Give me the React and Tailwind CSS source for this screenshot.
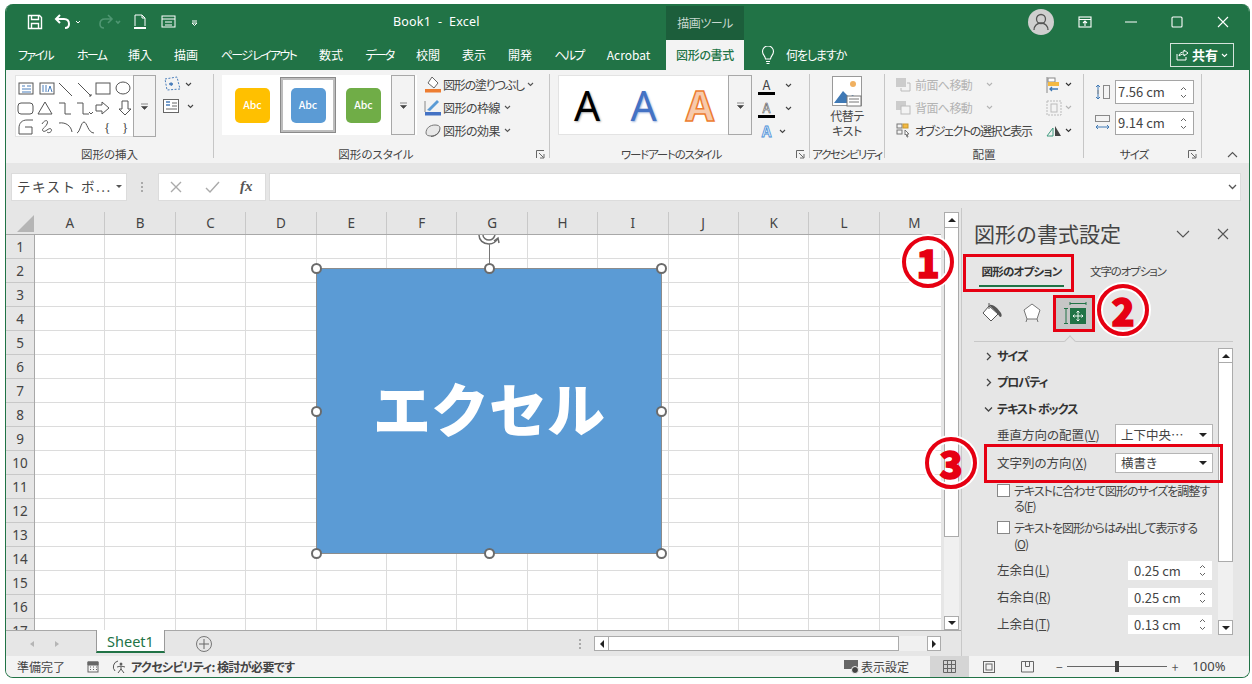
import React from "react";

const columns = ["A", "B", "C", "D", "E", "F", "G", "H", "I", "J", "K", "L", "M"];
const rows = Array.from({ length: 17 }, (_, i) => i + 1);
const tabs = [
  ["ファイル", "w-[34px] mr-[3px] tracking-[-1.7px]"],
  ["ホーム", "w-[29px] tracking-[-1.7px]"],
  ["挿入", "w-[24px]"],
  ["描画", "w-[24px]"],
  ["ページ レイアウト", "w-[77px] tracking-[-1.7px]"],
  ["数式", "w-[24px]"],
  ["データ", "w-[29px] tracking-[-1.7px]"],
  ["校閲", "w-[24px]"],
  ["表示", "w-[24px]"],
  ["開発", "w-[24px]"],
  ["ヘルプ", "w-[30px] tracking-[-1.7px]"],
  ["Acrobat", "w-[45px]"],
];

const Chevron = ({ className = "" }) => (
  <svg width="7" height="5" viewBox="0 0 7 5" className={className}>
    <path d="M1 1l2.5 2.5L6 1" fill="none" stroke="currentColor" strokeWidth="1.1" />
  </svg>
);

const Launcher = () => (
  <svg width="9" height="9" viewBox="0 0 9 9" className="text-[#666]">
    <path d="M.5 8V.5H8M3 3l4.5 4.5M4 8h4V4" fill="none" stroke="currentColor" />
  </svg>
);

const Sep = () => <div className="w-px h-[84px] mt-[4px] bg-[#c6c6c6] shrink-0" />;

const Group = ({ width, label, labelClass = "", launcher, children }) => (
  <div className={`${width} shrink-0 flex flex-col`}>
    <div className="h-[76px] flex">{children}</div>
    <div className="h-[17px] flex items-center">
      <div className={`flex-1 text-center text-[11.5px] leading-[17px] text-[#444] whitespace-nowrap ${labelClass}`}>{label}</div>
      {launcher && (
        <div className="w-[17px] flex justify-center">
          <Launcher />
        </div>
      )}
    </div>
  </div>
);

const MoreButton = ({ className }) => (
  <div className={`flex items-center justify-center bg-[#f3f3f3] border border-[#a8a8a8] ${className}`}>
    <svg width="9" height="7" viewBox="0 0 9 7" className="text-[#444]">
      <path d="M1 1h7M1.5 3.5h6L4.5 6.5z" fill="currentColor" stroke="currentColor" strokeWidth=".6" />
    </svg>
  </div>
);

const ShapeGallery = () => (
  <svg width="117" height="60" viewBox="0 0 117 60" fill="none" stroke="#555" strokeWidth="1">
    <rect x="3" y="7" width="14" height="11" fill="#fff" />
    <path d="M6 10h3M11 10h4M6 13h9M6 16h9" stroke="#4a7ebb" />
    <rect x="24" y="7" width="14" height="11" fill="#fff" />
    <path d="M27 9v7M30 9v7M34 10l2 6M34 10l-2 6" stroke="#4a7ebb" />
    <path d="M43 7l13 13M62 7l13 13M73 20l2 0 0-2" />
    <rect x="80" y="7" width="14" height="11" />
    <ellipse cx="107" cy="12" rx="7" ry="6" />
    <rect x="2" y="27" width="15" height="11" rx="3" />
    <path d="M22 38l7-12 7 12zM43 27h6v11h6M61 27h6v11h6M73 36l2 2 2-2M80 29h6v-3l7 6-7 6v-3h-6zM106 25v8h-3l6 6 6-6h-3v-8z" />
    <path d="M3 58v-6c0-5 3-8 8-8h6M3 58h13v-7H9" />
    <path d="M26 48c3-5 7-4 5 0s-6 5-4 7 6-4 8-2-2 5-4 3" />
    <path d="M43 47c7-1 12 3 13 9M61 57c3-1 4-11 7-11s4 11 10 11" />
    <text x="88" y="56" fontSize="13" fill="#444" stroke="none" fontFamily="Liberation Serif, serif">{"{"}</text>
    <text x="106" y="56" fontSize="13" fill="#444" stroke="none" fontFamily="Liberation Serif, serif">{"}"}</text>
  </svg>
);

const StyleTile = ({ color }) => (
  <div className={`w-[35px] h-[35px] rounded-[5px] flex items-center justify-center text-white text-[10.5px] font-medium ${color}`}>
    Abc
  </div>
);

const FillLabel = ({ icon, label, pad, track }) => (
  <div className="h-[23px] flex items-center whitespace-nowrap text-[12px] text-[#444]">
    <div className="w-[20px] flex justify-center">{icon}</div>
    <span className={track}>{label}</span>
    <Chevron className={`text-[#555] ${pad}`} />
  </div>
);

const SpinInput = ({ value, className }) => (
  <div className={`flex items-center justify-between bg-white border border-[#e6e6e6] text-[13px] text-[#444] ${className}`}>
    <span>{value}</span>
    <svg width="7" height="13" viewBox="0 0 7 13" className="mr-[6px] text-[#666]">
      <path d="M1 4l2.5-2.5L6 4M1 9l2.5 2.5L6 9" fill="none" stroke="currentColor" />
    </svg>
  </div>
);

const Select = ({ label, className }) => (
  <div className={`w-[98px] flex items-center justify-between bg-white border border-[#b5b5b5] text-[12.5px] text-[#444] ${className}`}>
    <span className="pl-[5px]">{label}</span>
    <div className="mr-[5px] w-0 h-0 border-x-[4px] border-x-transparent border-t-[4px] border-t-[#222]" />
  </div>
);

const ScrollButton = ({ dir, className = "" }) => (
  <div className={`flex items-center justify-center bg-white border border-[#ababab] shrink-0 ${className}`}>
    {dir === "up" && <div className="w-0 h-0 border-x-[4px] border-x-transparent border-b-[4px] border-b-[#222]" />}
    {dir === "down" && <div className="w-0 h-0 border-x-[4px] border-x-transparent border-t-[4px] border-t-[#222]" />}
    {dir === "left" && <div className="w-0 h-0 border-y-[4px] border-y-transparent border-r-[4px] border-r-[#222]" />}
    {dir === "right" && <div className="w-0 h-0 border-y-[4px] border-y-transparent border-l-[4px] border-l-[#222]" />}
  </div>
);

const Handle = ({ className }) => (
  <div className={`absolute w-[11px] h-[11px] rounded-full bg-white border-2 border-[#6b6b6b] ${className}`} />
);

const Callout = ({ n, className }) => (
  <div
    className={`absolute w-[52px] h-[52px] rounded-full border-[4px] border-[#e60012] flex items-center justify-center text-[#e60012] text-[38px] leading-none font-black [-webkit-text-stroke:1.5px_#e60012] [box-shadow:0_0_0_2px_#fff,inset_0_0_0_2px_#fff] ${className}`}
  >
    {n}
  </div>
);

const PanelField = ({ label, hot, value, className = "" }) => (
  <div className={`flex items-center justify-between pl-[13px] pr-[5px] text-[12.5px] text-[#444] ${className}`}>
    <span>
      {label}(<span className="underline">{hot}</span>)
    </span>
    <SpinInput value={value} className="w-[86px] h-[21px] pl-[6px]" />
  </div>
);

const SectionRow = ({ open, label, className = "" }) => (
  <div className={`h-[26px] flex items-center font-bold text-[12px] tracking-[-1px] text-[#333] ${className}`}>
    <svg width="13" height="9" viewBox="0 0 13 9" className="text-[#444] shrink-0">
      <path d={open ? "M1 2.5l3.5 3.5L8 2.5" : "M3 1l3.5 3.5L3 8"} fill="none" stroke="currentColor" strokeWidth="1.3" />
    </svg>
    <span>{label}</span>
  </div>
);

export default function App() {
  return (
    <div className="relative w-[1252px] h-[684px] bg-white pt-[4px] pl-[5px] pr-[2px] pb-[6px] overflow-hidden font-['Noto_Sans_CJK_JP',sans-serif] [font-feature-settings:'palt']">
      <div className="h-full flex flex-col rounded-[8px] overflow-hidden border-l border-r border-b border-[#217346] bg-[#e6e6e6]">
        {/* title bar */}
        <div className="h-[36px] bg-[#217346] flex text-white shrink-0">
          <div className="w-[660px] flex items-center shrink-0">
            <svg width="190" height="18" viewBox="0 0 190 18" className="ml-[21px]" fill="none" stroke="#fff" strokeWidth="1.4">
              <path d="M1.5 2.5h11l2 2v11h-13zM4.5 2.5v4h7v-4M4.5 15.5v-5h7v5" />
              <path d="M30 6h7c3 0 5 2 5 5s-2 4-4 4M33 2l-4 4 4 4" strokeWidth="2" />
              <path d="M49 8l2 2 2-2" strokeWidth="1" />
              <path d="M84 6h-6c-3 0-5 2-5 5s2 4 4 4M81 2l4 4-4 4M89 8l2 2 2-2" stroke="#4f9672" strokeWidth="1.6" />
              <path d="M108 2h7l3 3v8M108 2v11M115 2v3h3" strokeWidth="1" />
              <path d="M107 15h12" strokeWidth="2" />
              <rect x="135" y="3" width="13" height="11" strokeWidth="1" />
              <path d="M135 6h13M138 9h7M138 12h7" strokeWidth="1" />
              <path d="M165 8h5M165 10h5l-2.5 2.500z" strokeWidth="1" />
            </svg>
            <div className="ml-[176px] text-[12.5px] whitespace-nowrap font-['Noto_Sans',sans-serif] tracking-[0.2px]">Book1 &nbsp;-&nbsp; Excel</div>
          </div>
          <div className="w-[78px] mt-[2px] bg-[#1c5e3b] flex items-center justify-center text-[12px] tracking-[-0.5px] text-[#c7d8cf]">描画ツール</div>
          <div className="flex-1 flex items-center">
            <div className="ml-[284px] w-[26px] h-[26px] rounded-full bg-[#cfcfcf] flex items-center justify-center">
              <svg width="16" height="18" viewBox="0 0 16 18" fill="none" stroke="#555" strokeWidth="1.3">
                <circle cx="8" cy="6" r="4.5" />
                <path d="M1 17c0-4 3-7 7-7s7 3 7 7" />
              </svg>
            </div>
            <svg width="152" height="14" viewBox="0 0 152 14" className="ml-[24px]" fill="none" stroke="#fff" strokeWidth="1.1">
              <rect x="1" y="2" width="12" height="10" />
              <path d="M1 4.500h12M7 11V6M5 8l2-2 2 2" />
              <path d="M47 7h12" />
              <rect x="94" y="2" width="10" height="10" rx="1" />
              <path d="M140 2l10 10M150 2l-10 10" />
            </svg>
          </div>
        </div>
        {/* tabs */}
        <div className="h-[30px] bg-[#217346] flex text-white text-[12px] shrink-0">
          <div className="flex items-center gap-[22px] pl-[12px] w-[660px] shrink-0 whitespace-nowrap">
            {tabs.map(([label, w]) => (
              <div key={label} className={`${w} text-center shrink-0`}>
                {label}
              </div>
            ))}
          </div>
          <div className="w-[78px] bg-[#f3f3f3] text-[#217346] flex items-center justify-center font-medium tracking-[-0.3px]">図形の書式</div>
          <div className="flex-1 flex items-center">
            <svg width="16" height="19" viewBox="0 0 16 19" className="ml-[16px] shrink-0" fill="none" stroke="#fff" strokeWidth="1.1">
              <path d="M5.500 13c0-3-3-4-3-7.500a5.500 5.500 0 0 1 11 0C13.500 9 10.500 10 10.500 13zM6 15.500h4M6.500 17.500h3" />
            </svg>
            <span className="ml-[10px] w-[60px] whitespace-nowrap tracking-[-1.1px] shrink-0">何をしますか</span>
            <div className="ml-[324px] w-[64px] h-[24px] border border-[#d5e3db] flex items-center justify-center gap-[3px] font-bold text-[13px] shrink-0">
              <svg width="13" height="12" viewBox="0 0 13 12" fill="none" stroke="#fff">
                <path d="M1 5v6h9V8M3 7c0-3 3-4 5-4V1l4 3-4 3V5C6 5 4 6 3 7z" />
              </svg>
              共有
              <Chevron className="text-white" />
            </div>
          </div>
        </div>
        {/* ribbon */}
        <div className="h-[93px] bg-[#f3f3f3] flex shrink-0">
          <Group width="w-[207px]" label="図形の挿入">
            <div className="ml-[9px] mt-[5px] w-[141px] h-[62px] bg-white border border-[#e3e3e3] flex">
              <div className="flex-1">
                <ShapeGallery />
              </div>
              <MoreButton className="w-[23px] -my-px -mr-px" />
            </div>
            <div className="ml-[7px] mt-[5px] flex flex-col gap-[6px]">
              <div className="flex items-center gap-[2px] text-[#444]">
                <svg width="20" height="18" viewBox="0 0 20 18" fill="none" stroke="#4a7ebb" strokeDasharray="2 1.500">
                  <path d="M2 4l12-2 3 12-13 1z" />
                  <circle cx="8" cy="9" r="1.500" fill="#4a7ebb" />
                </svg>
                <Chevron />
              </div>
              <div className="flex items-center gap-[8px] text-[#444]">
                <svg width="16" height="14" viewBox="0 0 16 14" fill="none" stroke="#666">
                  <rect x=".5" y=".5" width="15" height="13" fill="#fff" />
                  <path d="M3 3h4M3 6h4" stroke="#4a7ebb" strokeWidth="1.500" />
                  <path d="M9 4h5M9 7h5M3 10h11" />
                </svg>
                <Chevron />
              </div>
            </div>
          </Group>
          <Sep />
          <Group width="w-[335px]" label="図形のスタイル" labelClass="pl-[6px]" launcher>
            <div className="ml-[8px] mt-[5px] w-[195px] h-[60px] bg-white flex items-center pl-[13px] shrink-0">
              <StyleTile color="bg-[#ffc000]" />
              <div className="ml-[10px] w-[56px] h-[56px] border-[3px] border-[#bdbdbd] outline outline-1 outline-[#8a8a8a] -outline-offset-1 flex items-center justify-center">
                <StyleTile color="bg-[#5b9bd5]" />
              </div>
              <div className="ml-[10px]">
                <StyleTile color="bg-[#70ad47]" />
              </div>
              <MoreButton className="ml-[10px] w-[24px] h-[60px]" />
            </div>
            <div className="ml-[6px] mt-[3px] flex flex-col">
              <FillLabel
                label="図形の塗りつぶし"
                pad="ml-[3px]"
                track="tracking-[-1.2px]"
                icon={
                  <svg width="18" height="17" viewBox="0 0 18 17">
                    <path d="M8 1l6 6-4 5-6-5z" fill="#fff" stroke="#666" />
                    <rect x="1" y="13" width="16" height="3.500" fill="#ed7d31" />
                  </svg>
                }
              />
              <FillLabel
                label="図形の枠線"
                pad="ml-[4px]"
                track="tracking-[-0.5px]"
                icon={
                  <svg width="18" height="17" viewBox="0 0 18 17">
                    <path d="M3 11L13 1l2 2L6 12z" fill="#5b9bd5" />
                    <path d="M1 2v11" stroke="#888" />
                    <rect x="1" y="13" width="16" height="3.500" fill="#4472c4" />
                  </svg>
                }
              />
              <FillLabel
                label="図形の効果"
                pad="ml-[4px]"
                track="tracking-[-0.5px]"
                icon={
                  <svg width="18" height="15" viewBox="0 0 18 15">
                    <path d="M2 10c0-5 4-8 9-8 3 0 5 1 5 3 0 5-4 8-9 8-3 0-5-1-5-3z" fill="#e8e8e8" stroke="#777" />
                    <path d="M7 13c4 0 8-3 9-8v2c-1 4-5 7-9 7z" fill="#666" />
                  </svg>
                }
              />
            </div>
          </Group>
          <Sep />
          <Group width="w-[259px]" label="ワードアートのスタイル" labelClass="tracking-[-1.2px]" launcher>
            <div className="ml-[8px] mt-[5px] w-[194px] h-[60px] bg-white border border-[#e3e3e3] flex items-center shrink-0">
              <div className="w-[57px] text-center text-[41px] leading-none font-['Noto_Sans',sans-serif] text-black [text-shadow:1px_1px_2px_#aaa]">A</div>
              <div className="w-[57px] text-center text-[41px] leading-none font-['Noto_Sans',sans-serif] text-[#4472c4] [text-shadow:1px_1px_2px_#9db4dc]">A</div>
              <div className="w-[57px] text-center text-[41px] leading-none font-['Noto_Sans',sans-serif] font-bold text-[#f7caac] [-webkit-text-stroke:1.5px_#ed7d31]">A</div>
              <MoreButton className="w-[24px] h-[60px] -mr-[1px]" />
            </div>
            <div className="ml-[6px] mt-[4px] flex flex-col text-[#444]">
              <div className="h-[23px] flex items-center gap-[10px]">
                <div className="w-[17px] border-b-[3px] border-black text-center text-[13px] leading-[15px]">A</div>
                <Chevron />
              </div>
              <div className="h-[23px] flex items-center gap-[10px]">
                <div className="w-[17px] border-b-[3px] border-black text-center text-[13px] leading-[15px] text-white [-webkit-text-stroke:0.6px_#555]">A</div>
                <Chevron />
              </div>
              <div className="h-[22px] flex items-center gap-[4px]">
                <div className="w-[17px] text-center text-[15px] leading-[16px] font-bold text-[#dbe8f6] [-webkit-text-stroke:0.8px_#4a90d9]">A</div>
                <Chevron />
              </div>
            </div>
          </Group>
          <Sep />
          <Group width="w-[74px]" label="アクセシビリティ" labelClass="tracking-[-1.4px]">
            <div className="w-full flex flex-col items-center pt-[6px]">
              <svg width="30" height="31" viewBox="0 0 30 31">
                <rect x=".5" y=".5" width="29" height="29" fill="#fff" stroke="#999" />
                <circle cx="21" cy="8" r="3" fill="#f0b060" />
                <path d="M2 27l9-12 6 6 4-2 6 8z" fill="#3f79b5" />
                <rect x="15" y="20" width="14" height="10" fill="#fff" stroke="#777" />
                <path d="M17 23h10M17 26h10" stroke="#777" />
              </svg>
              <div className="mt-[1px] text-[12px] leading-[15px] text-center text-[#444] tracking-[-0.5px]">
                代替テ
                <br />
                キスト
              </div>
            </div>
          </Group>
          <Sep />
          <Group width="w-[198px]" label="配置">
            <div className="pl-[11px] pt-[3px] w-[150px] shrink-0 flex flex-col whitespace-nowrap text-[12px]">
              <div className="h-[23px] flex items-center text-[#b4b4b4] tracking-[-0.6px]">
                <svg width="15" height="14" viewBox="0 0 15 14" className="mr-[4px] shrink-0">
                  <rect x="0" y="0" width="10" height="9" fill="#ccc" />
                  <path d="M11 5h3v8H5v-3" fill="none" stroke="#bbb" />
                </svg>
                前面へ移動
                <Chevron className="ml-[14px]" />
              </div>
              <div className="h-[23px] flex items-center text-[#b4b4b4] tracking-[-0.6px]">
                <svg width="15" height="14" viewBox="0 0 15 14" className="mr-[4px] shrink-0">
                  <rect x="0" y="0" width="10" height="9" fill="#ccc" />
                  <rect x="5" y="5" width="9" height="8" fill="#f3f3f3" stroke="#bbb" />
                </svg>
                背面へ移動
                <Chevron className="ml-[14px]" />
              </div>
              <div className="h-[23px] flex items-center text-[#444] tracking-[-1.4px]">
                <svg width="15" height="15" viewBox="0 0 15 15" className="mr-[4px] shrink-0" fill="none" stroke="#777">
                  <rect x="1" y="1" width="5" height="4" />
                  <rect x="7" y="1" width="5" height="4" fill="#f4b942" stroke="#c99a30" />
                  <rect x="1" y="7" width="5" height="4" />
                  <path d="M9 7l4 4-2 0 1 3-1 0-1-3-1 1z" fill="#fff" />
                </svg>
                オブジェクトの選択と表示
              </div>
            </div>
            <div className="ml-[11px] pt-[3px] flex flex-col">
              <div className="h-[23px] flex items-center gap-[4px] text-[#333]">
                <svg width="15" height="18" viewBox="0 0 15 18">
                  <path d="M1 1v16" stroke="#888" />
                  <rect x="2" y="2" width="7" height="4" fill="#fff" stroke="#888" />
                  <rect x="2" y="6" width="11" height="4" fill="#f4b942" />
                  <path d="M12 13H4M6 11l-2 2 2 2" stroke="#3f79b5" fill="none" strokeWidth="1.300" />
                </svg>
                <Chevron />
              </div>
              <div className="h-[23px] flex items-center gap-[3px] text-[#b4b4b4]">
                <svg width="16" height="16" viewBox="0 0 16 16" fill="none" stroke="#bbb" strokeDasharray="2 1">
                  <rect x="1" y="1" width="14" height="14" />
                  <rect x="5" y="4" width="6" height="8" strokeDasharray="none" />
                </svg>
                <Chevron />
              </div>
              <div className="h-[23px] flex items-center gap-[3px] text-[#333]">
                <svg width="16" height="13" viewBox="0 0 16 13">
                  <path d="M1 12l6-8v8z" fill="none" stroke="#3f9b7f" />
                  <path d="M9 2v10h6z" fill="#444" />
                </svg>
                <Chevron />
              </div>
            </div>
          </Group>
          <Sep />
          <Group width="w-[117px]" label="サイズ" labelClass="tracking-[-1px]" launcher>
            <div className="pl-[11px] pt-[10px] flex flex-col gap-[7px]">
              <div className="flex items-center gap-[5px]">
                <svg width="15" height="18" viewBox="0 0 15 18" fill="none">
                  <path d="M3 2v14M1 4l2-2 2 2M1 14l2 2 2-2" stroke="#3f79b5" />
                  <path d="M3 7v4" stroke="#888" />
                  <rect x="8.500" y="2.500" width="6" height="13" stroke="#888" />
                </svg>
                <SpinInput value="7.56 cm" className="w-[79px] h-[24px] pl-[2px] !border-[#a5a5a5]" />
              </div>
              <div className="flex items-center gap-[5px]">
                <svg width="15" height="18" viewBox="0 0 15 18" fill="none">
                  <rect x=".5" y="1.500" width="14" height="6" stroke="#888" />
                  <path d="M1 13h13M3 11l-2 2 2 2M12 11l2 2-2 2" stroke="#3f79b5" />
                </svg>
                <SpinInput value="9.14 cm" className="w-[79px] h-[24px] pl-[2px] !border-[#a5a5a5]" />
              </div>
            </div>
          </Group>
          <Sep />
          <div className="flex-1 flex items-end justify-end pr-[11px] pb-[5px]">
            <svg width="11" height="7" viewBox="0 0 11 7" className="text-[#555]">
              <path d="M1 6l4.500-4.500L10 6" fill="none" stroke="currentColor" strokeWidth="1.100" />
            </svg>
          </div>
        </div>
        {/* formula bar */}
        <div className="h-[45px] flex items-center pl-[5px] pr-[8px] pt-[2px] shrink-0">
          <div className="w-[116px] h-[28px] bg-white border border-[#dcdcdc] flex items-center justify-between text-[#444] text-[13.500px] tracking-[1.5px] pl-[5px] pr-[4px] [font-feature-settings:normal] whitespace-nowrap shrink-0">
            テキスト ボ...
            <div className="w-0 h-0 border-x-[3px] border-x-transparent border-t-[3px] border-t-[#555]" />
          </div>
          <svg width="4" height="12" viewBox="0 0 4 12" className="ml-[13px] mr-[14px] shrink-0">
            <path d="M1 1h2v2H1zM1 5h2v2H1zM1 9h2v2H1z" fill="#aaa" />
          </svg>
          <div className="w-[108px] h-[28px] bg-white border border-[#dcdcdc] flex items-center text-[#aaa] shrink-0">
            <svg width="12" height="12" viewBox="0 0 12 12" className="ml-[11px]">
              <path d="M1 1l10 10M11 1L1 11" stroke="currentColor" strokeWidth="1.400" />
            </svg>
            <svg width="15" height="12" viewBox="0 0 15 12" className="ml-[23px]">
              <path d="M1 7l4 4 9-10" fill="none" stroke="currentColor" strokeWidth="1.400" />
            </svg>
            <span className="ml-[20px] text-[15px] font-bold italic font-['Liberation_Serif',serif] text-[#555]">fx</span>
          </div>
          <div className="ml-[3px] flex-1 h-[28px] bg-white border border-[#dcdcdc] flex items-center justify-end pr-[3px] text-[#555]">
            <svg width="9" height="6" viewBox="0 0 9 6">
              <path d="M1 1l3.500 3.500L8 1" fill="none" stroke="currentColor" strokeWidth="1.300" />
            </svg>
          </div>
        </div>
        {/* work area */}
        <div className="flex-1 flex min-h-0">
          <div className="w-[955px] shrink-0 flex flex-col">
            <div className="h-[422px] pt-[4px] flex">
              <div className="w-[935px] flex flex-col shrink-0 overflow-hidden">
                <div className="h-[23px] flex border-b border-[#a8a8a8] text-[#444] text-[13.500px] font-['Noto_Sans',sans-serif] shrink-0">
                  <div className="w-[29px] flex items-end justify-end pr-[1px] pb-[2px] shrink-0">
                    <div className="w-0 h-0 border-l-[17px] border-l-transparent border-b-[17px] border-b-[#b5b5b5]" />
                  </div>
                  {columns.map((c) => (
                    <div key={c} className="w-[70.4px] shrink-0 flex items-center justify-center border-r border-[#c8c8c8]">
                      {c}
                    </div>
                  ))}
                </div>
                <div className="flex-1 flex min-h-0 overflow-hidden">
                  <div className="w-[29px] shrink-0 text-[#444] text-[13.500px] font-['Noto_Sans',sans-serif] border-r border-[#a8a8a8]">
                    {rows.map((r) => (
                      <div key={r} className="h-[24px] pt-[1px] flex items-center justify-center border-b border-[#c8c8c8]">
                        {r}
                      </div>
                    ))}
                  </div>
                  <div className="relative flex-1 bg-white overflow-hidden">
                    {rows.map((r) => (
                      <div key={r} className="h-[24px] flex border-b border-[#dcdcdc]">
                        {columns.map((c) => (
                          <div key={c} className="w-[70.4px] shrink-0 h-full border-r border-[#dcdcdc]" />
                        ))}
                      </div>
                    ))}
                    <svg width="28" height="12" viewBox="0 0 28 12" className="absolute left-[440px] top-0" fill="none" stroke="#6b6b6b" strokeWidth="1.500">
                      <path d="M4 0c0 5 4 9 10 9s8-4 9-6M8 0c0 3 3 5 6 5s5-2 6-5M19 6l4-3 1 5" />
                    </svg>
                    <div className="absolute left-[454px] top-[9px] w-px h-[24px] bg-[#777]" />
                    <div className="absolute left-[281px] top-[33px] w-[346px] h-[286px] bg-[#5b9bd5] border border-[#8c8c8c] flex items-center justify-center">
                      <span className="text-white text-[58px] font-black leading-none whitespace-nowrap -mt-[9px] [font-feature-settings:normal]">エクセル</span>
                      <Handle className="-left-[6px] -top-[6px]" />
                      <Handle className="left-[167px] -top-[6px]" />
                      <Handle className="-right-[6px] -top-[6px]" />
                      <Handle className="-left-[6px] top-[137px]" />
                      <Handle className="-right-[6px] top-[137px]" />
                      <Handle className="-left-[6px] -bottom-[6px]" />
                      <Handle className="left-[167px] -bottom-[6px]" />
                      <Handle className="-right-[6px] -bottom-[6px]" />
                    </div>
                  </div>
                </div>
              </div>
              <div className="ml-[3px] w-[15px] flex flex-col shrink-0 bg-[#f0f0f0]">
                <ScrollButton dir="up" className="h-[16px]" />
                <div className="h-[309px] bg-white border-x border-b border-[#ababab]" />
                <div className="flex-1" />
                <ScrollButton dir="down" className="h-[14px]" />
              </div>
            </div>
            <div className="flex-1 border-t border-[#a8a8a8] flex text-[#777]">
              <div className="w-[90px] flex items-center shrink-0 text-[#b5b5b5]">
                <div className="ml-[24px] w-0 h-0 border-y-[3px] border-y-transparent border-r-[4px] border-r-current" />
                <div className="ml-[21px] w-0 h-0 border-y-[3px] border-y-transparent border-l-[4px] border-l-current" />
              </div>
              <div className="w-[69px] h-[23px] -mt-px bg-white border-x border-b-2 border-[#9a9a9a] border-b-[#217346] flex items-center justify-center pt-[2px] text-[#217346] text-[14.5px] font-['Noto_Sans',sans-serif] shrink-0">
                Sheet1
              </div>
              <div className="ml-[31px] mt-[5px] w-[16px] h-[16px] rounded-full border border-[#777] flex items-center justify-center shrink-0">
                <svg width="10" height="10" viewBox="0 0 10 10">
                  <path d="M5 0v10M0 5h10" stroke="#666" />
                </svg>
              </div>
              <svg width="4" height="12" viewBox="0 0 4 12" className="ml-[366px] mt-[7px] shrink-0">
                <path d="M1 1h2v2H1zM1 5h2v2H1zM1 9h2v2H1z" fill="#aaa" />
              </svg>
              <div className="ml-[12px] mt-[5px] h-[15px] w-[347px] flex bg-[#f0f0f0] shrink-0">
                <ScrollButton dir="left" className="w-[15px]" />
                <div className="w-[290px] bg-white border-y border-r border-[#ababab]" />
                <div className="w-[28px]" />
                <ScrollButton dir="right" className="w-[14px]" />
              </div>
            </div>
          </div>
          {/* format pane */}
          <div className="flex-1 border-l border-[#c8c8c8] pl-[12px] flex flex-col min-w-0">
            <div className="h-[54px] pb-[2px] flex items-center justify-between pr-[19px] shrink-0">
              <span className="text-[21px] text-[#444] whitespace-nowrap [font-feature-settings:normal]">図形の書式設定</span>
              <svg width="54" height="12" viewBox="0 0 54 12" fill="none" stroke="#555" strokeWidth="1.100">
                <path d="M1 3l6 6 6-6M42 1l10 10M52 1L42 11" />
              </svg>
            </div>
            <div className="h-[26px] flex text-[11.500px] whitespace-nowrap shrink-0">
              <div className="w-[85px] ml-[5px] flex flex-col items-center shrink-0">
                <span className="h-[18px] leading-[18px] font-bold tracking-[-0.8px] text-[#333]">図形のオプション</span>
                <div className="mt-[5px] w-full h-[2px] bg-[#217346]" />
              </div>
              <span className="ml-[26px] h-[18px] leading-[18px] tracking-[-1.1px] text-[#444]">文字のオプション</span>
            </div>
            <div className="mt-[8px] h-[34px] flex items-center shrink-0">
              <svg width="24" height="22" viewBox="0 0 24 22" className="ml-[6px]">
                <path d="M9 4l9 8-7 7-8-8z" fill="#fff" stroke="#555" />
                <path d="M9 1v6" stroke="#555" />
                <path d="M9 3c5-1 8 3 12 8 1 2 1 4-1 4l-3-4z" fill="#555" />
              </svg>
              <svg width="20" height="20" viewBox="0 0 20 20" className="ml-[18px]">
                <path d="M10 1l8 6-3 9H5L2 7z" fill="#fff" stroke="#777" />
                <path d="M4 19l1-3M16 19l-1-3" stroke="#777" />
              </svg>
              <div className="ml-[13px] w-[40px] h-[34px] bg-[#c6c6c6] flex items-center justify-center">
                <svg width="24" height="24" viewBox="0 0 24 24">
                  <path d="M7 2.500h16M7 1v3M23 1v3M1 7.500h4M1 22.500h4M3 7.500v15" stroke="#217346" fill="none" />
                  <rect x="7" y="7" width="16" height="16" fill="#217346" />
                  <path d="M15 10v10M10 15h10M13.500 11.500L15 10l1.500 1.500M13.500 18.500L15 20l1.500-1.500M11.500 13.500L10 15l1.500 1.500M18.500 13.500L20 15l-1.500 1.500" stroke="#fff" fill="none" strokeWidth=".9" />
                </svg>
              </div>
            </div>
            <div className="relative mt-[11px] mr-[16px] h-px bg-[#c8c8c8] shrink-0">
              <div className="absolute left-[92px] -top-[4px] w-[8px] h-[8px] rotate-45 bg-[#e6e6e6] border-l border-t border-[#c8c8c8]" />
            </div>
            <div className="flex-1 flex min-h-0 mr-[16px]">
              <div className="w-[244px] shrink-0 pl-[10px] pt-[1px]">
                <SectionRow label="サイズ" />
                <SectionRow label="プロパティ" />
                <SectionRow open label="テキスト ボックス" className="mt-[1px]" />
                <div className="mt-[2px] h-[22px] flex items-center justify-between pl-[13px] pr-[5px] text-[12.500px] text-[#444]">
                  <span>
                    垂直方向の配置(<span className="underline">V</span>)
                  </span>
                  <Select label="上下中央…" className="h-[22px]" />
                </div>
                <div className="mt-[7px] h-[20px] flex items-center justify-between pl-[13px] pr-[5px] text-[12.500px] text-[#444]">
                  <span>
                    文字列の方向(<span className="underline">X</span>)
                  </span>
                  <Select label="横書き" className="h-[20px]" />
                </div>
                <div className="mt-[10px] ml-[13px] flex text-[12px] leading-[15px] tracking-[-1px] text-[#444]">
                  <div className="w-[13px] h-[13px] bg-white border border-[#888] shrink-0 mt-[1px]" />
                  <div className="ml-[4px] whitespace-nowrap">
                    テキストに合わせて図形のサイズを調整す
                    <br />
                    る(<span className="underline">F</span>)
                  </div>
                </div>
                <div className="mt-[7px] ml-[13px] flex text-[12px] leading-[16px] tracking-[-1px] text-[#444]">
                  <div className="w-[13px] h-[13px] bg-white border border-[#888] shrink-0 mt-[1px]" />
                  <div className="ml-[4px] whitespace-nowrap">
                    テキストを図形からはみ出して表示する
                    <br />(<span className="underline">O</span>)
                  </div>
                </div>
                <PanelField label="左余白" hot="L" value="0.25 cm" className="mt-[8px]" />
                <PanelField label="右余白" hot="R" value="0.25 cm" className="mt-[6px]" />
                <PanelField label="上余白" hot="T" value="0.13 cm" className="mt-[6px]" />
              </div>
              <div className="w-[15px] flex flex-col pt-[6px] shrink-0">
                <ScrollButton dir="up" className="h-[15px]" />
                <div className="h-[199px] bg-white border-x border-b border-[#ababab]" />
                <div className="h-[58px] bg-[#f0f0f0]" />
                <ScrollButton dir="down" className="h-[15px]" />
              </div>
            </div>
          </div>
        </div>
        {/* status bar */}
        <div className="h-[21px] bg-[#f3f3f3] flex items-center text-[12px] text-[#444] shrink-0">
          <span className="ml-[11px] w-[48px] whitespace-nowrap shrink-0">準備完了</span>
          <svg width="12" height="12" viewBox="0 0 12 12" className="ml-[22px] shrink-0">
            <rect x="1" y="1" width="10" height="10" fill="none" stroke="#666" />
            <path d="M1 1h10v3H1zM3 6h1M6 6h1M9 6h1M3 8.500h1M6 8.500h1M9 8.500h1" fill="#666" stroke="#666" />
          </svg>
          <svg width="16" height="16" viewBox="0 0 16 16" className="ml-[13px] shrink-0" fill="none" stroke="#555">
            <path d="M6 2a6 6 0 0 0-3 10" />
            <circle cx="9" cy="5" r="1" fill="#555" />
            <path d="M5 8l4-1 4 1M9 7v3l-3 4M9 10l3 4" />
          </svg>
          <span className="ml-[3px] font-bold tracking-[-0.6px] whitespace-nowrap w-[298px] shrink-0">アクセシビリティ: 検討が必要です</span>
          <svg width="16" height="14" viewBox="0 0 16 14" className="ml-[415px] shrink-0">
            <path d="M0 0h14v9H0z" fill="#666" />
            <circle cx="11" cy="10" r="3.500" fill="#444" stroke="#f3f3f3" />
          </svg>
          <span className="ml-[1px] whitespace-nowrap w-[50px] shrink-0">表示設定</span>
          <div className="ml-[19px] w-[39px] h-full bg-[#d5d5d5] flex items-center justify-center shrink-0">
            <svg width="13" height="13" viewBox="0 0 13 13" fill="none" stroke="#666">
              <path d="M.5.5h12v12H.5zM4.500.5v12M8.500.5v12M.5 4.500h12M.5 8.500h12" />
            </svg>
          </div>
          <svg width="12" height="12" viewBox="0 0 12 12" className="ml-[14px] shrink-0" fill="none" stroke="#666">
            <rect x=".5" y=".5" width="11" height="11" />
            <rect x="3" y="3" width="6" height="6" />
          </svg>
          <svg width="13" height="12" viewBox="0 0 13 12" className="ml-[26px] shrink-0" fill="none" stroke="#666">
            <path d="M.5 11V.5h12V11M.5 11h12M4.500.5v5h4v-5" />
          </svg>
          <span className="ml-[22px] text-[#555]">−</span>
          <div className="relative ml-[4px] w-[100px] h-px bg-[#666] shrink-0">
            <div className="absolute left-[48px] -top-[5px] w-[4px] h-[11px] bg-[#444]" />
          </div>
          <span className="ml-[5px] text-[#555]">+</span>
          <span className="ml-[14px] text-[13px] font-['Noto_Sans',sans-serif]">100%</span>
        </div>
      </div>
      {/* red annotations */}
      <div className="absolute left-[963px] top-[254px] w-[111px] h-[38px] border-[3px] border-[#e60012]" />
      <div className="absolute left-[1053px] top-[295px] w-[42px] h-[37px] border-[3px] border-[#e60012]" />
      <div className="absolute left-[984px] top-[444px] w-[239px] h-[39px] border-[3px] border-[#e60012]" />
      <Callout n="1" className="left-[902px] top-[236px]" />
      <Callout n="2" className="left-[1097px] top-[284px]" />
      <Callout n="3" className="left-[925px] top-[437px]" />
    </div>
  );
}
